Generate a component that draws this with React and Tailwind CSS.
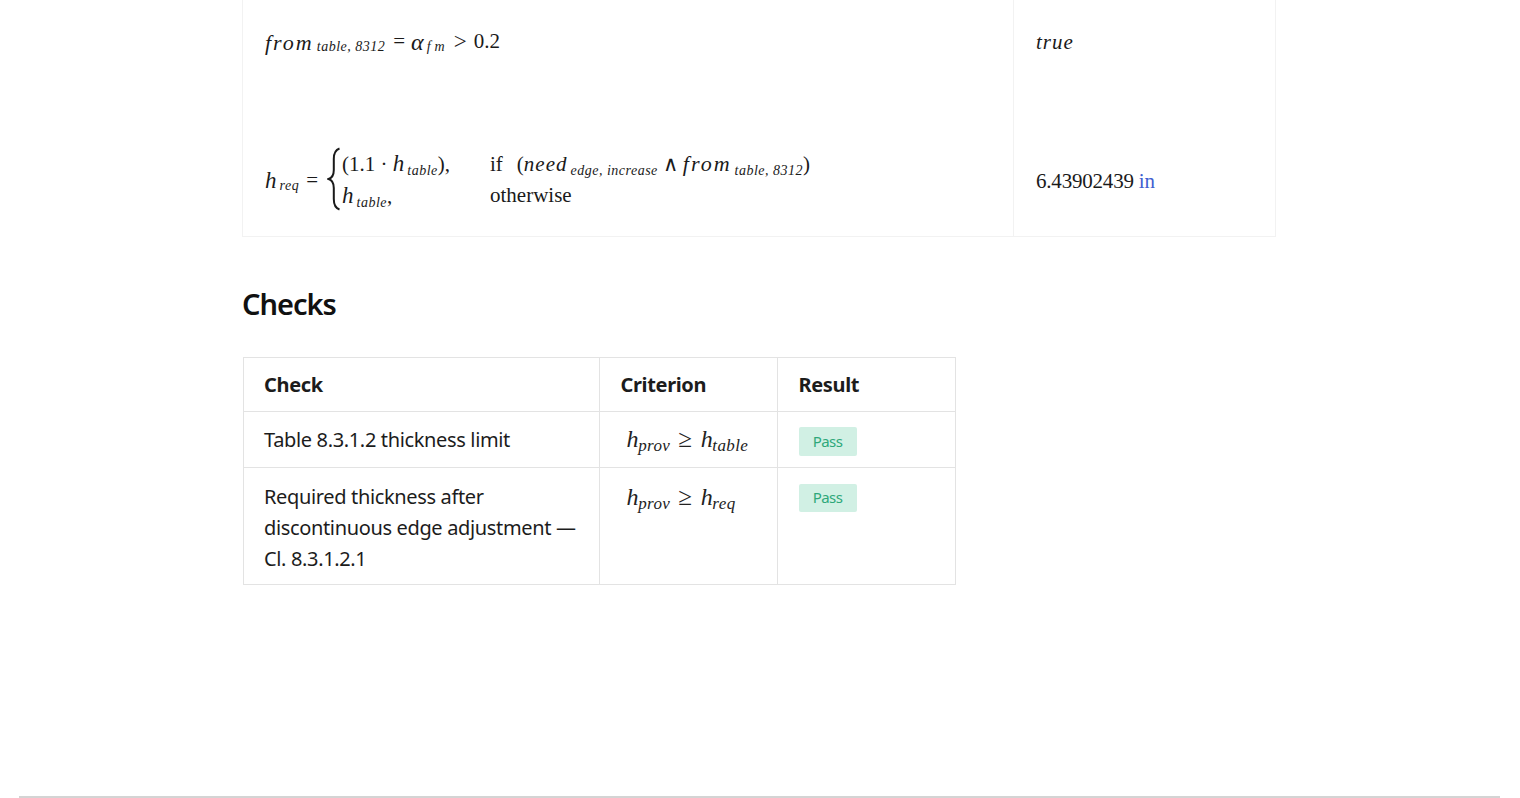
const serif = "font-['Liberation_Serif',serif]";
const cell = "border border-[#e3e3e3]";

function I({ children, className = "" }) {
  return <span className={`italic ${className}`}>{children}</span>;
}

function Sub({ children, className = "tracking-[0.5px]" }) {
  return <span className={`relative top-[4px] ml-[3px] text-[14px] italic ${className}`}>{children}</span>;
}

function Brace() {
  return (
    <svg width="14" height="64" viewBox="0 0 14 64" fill="none" stroke="#1a1a1a" strokeWidth="2" className="relative top-[-2px] mr-[1px] ml-[2px] shrink-0">
      <path d="M12.5 1.5C8 3 6.8 7 6.8 12V23C6.8 28 5 31 1.5 32C5 33 6.8 36 6.8 41V52C6.8 57 8 61 12.5 62.5" />
    </svg>
  );
}

function Pass({ h = "h-[29px]" }) {
  return (
    <span className={`inline-flex ${h} w-[58px] items-center justify-center rounded-[2px] bg-[#d1f0e4] text-[15px] tracking-[-0.6px] text-[#2ea87a]`}>
      Pass
    </span>
  );
}

function CheckCriterion({ sub }) {
  return (
    <span className={`${serif} pl-[6px] text-[24px] leading-[29px] text-[#222]`}>
      <I>h</I>
      <span className="relative top-[4px] text-[17px] tracking-[0.4px] italic">prov</span>
      <span className="mr-[9px] ml-[8px] text-[25px]">≥</span>
      <I>h</I>
      <span className="relative top-[4px] text-[17px] tracking-[0.4px] italic">{sub}</span>
    </span>
  );
}

export default function App() {
  return (
    <div className="flex h-[798px] flex-col overflow-hidden bg-white font-['Noto_Sans',sans-serif] text-[#1c1c1c]">
      <main className="flex-1 pl-[242px]">
        <div className={`${serif} grid h-[237px] w-[1034px] grid-cols-[770px_1fr] border-x border-b border-[#f2f2f2] text-[21px] text-[#1a1a1a]`}>
          <div className="flex flex-col pl-[22px]">
            <div className="flex h-[84px] items-center whitespace-pre">
              <I className="text-[22px] tracking-[2px]">from</I>
              <Sub>table, 8312</Sub>
              <span className="mr-[6px] ml-[8px]">=</span>
              <I className="text-[24px]">α</I>
              <Sub className="tracking-[4px]">fm</Sub>
              <span className="mr-[7px] ml-[5px] text-[23px]">&gt;</span>
              <span>0.2</span>
            </div>
            <div className="mt-[65px] flex items-center whitespace-pre">
              <I className="text-[23px]">h</I>
              <Sub>req</Sub>
              <span className="mx-[7px]">=</span>
              <Brace />
              <div className="grid grid-cols-[148px_1fr] leading-[29px]">
                <div>(1.1 · <I className="text-[23px]">h</I><Sub>table</Sub>),</div>
                <div>
                  if<span className="ml-[14px]">(</span><I className="tracking-[1px]">need</I><Sub>edge, increase</Sub>
                  <span className="mx-[5px]">∧</span>
                  <I className="text-[22px] tracking-[2px]">from</I><Sub>table, 8312</Sub>)
                </div>
                <div><I className="text-[23px]">h</I><Sub>table</Sub>,</div>
                <div>otherwise</div>
              </div>
            </div>
          </div>
          <div className="flex flex-col border-l border-[#f2f2f2] pl-[22px]">
            <div className="flex h-[84px] items-center pt-[2px]"><I className="tracking-[1px]">true</I></div>
            <div className="mt-[82px] tracking-[-0.2px]">6.43902439 <span className="text-[#3f5fd0]">in</span></div>
          </div>
        </div>

        <h2 className="mt-[46px] text-[29px] leading-[42px] font-semibold tracking-[-1px] text-[#111]">Checks</h2>

        <table className="mt-[32px] ml-px w-[712px] table-fixed border-collapse text-[20px] leading-[31px] tracking-[-0.35px]">
          <colgroup>
            <col className="w-[355.5px]" />
            <col className="w-[178px]" />
            <col className="w-[178.5px]" />
          </colgroup>
          <thead>
            <tr className="h-[54px] text-left font-bold">
              <th className={`${cell} pl-[20px]`}>Check</th>
              <th className={`${cell} pl-[21px]`}>Criterion</th>
              <th className={`${cell} pl-[21px]`}>Result</th>
            </tr>
          </thead>
          <tbody>
            <tr className="h-[56px]">
              <td className={`${cell} pl-[20px]`}>Table 8.3.1.2 thickness limit</td>
              <td className={`${cell} pl-[21px]`}><CheckCriterion sub="table" /></td>
              <td className={`${cell} pl-[21px]`}><Pass /></td>
            </tr>
            <tr>
              <td className={`${cell} pt-[13px] pr-[10px] pb-[10px] pl-[20px] align-top`}>
                Required thickness after discontinuous edge adjustment — Cl. 8.3.1.2.1
              </td>
              <td className={`${cell} pt-[14px] pl-[21px] align-top`}><CheckCriterion sub="req" /></td>
              <td className={`${cell} pt-[12px] pl-[21px] align-top`}><Pass h="h-[28px]" /></td>
            </tr>
          </tbody>
        </table>
      </main>
      <footer className="mx-[19px] h-[2px] w-[1481px] border-t-2 border-[#d4d4d4]" />
    </div>
  );
}
